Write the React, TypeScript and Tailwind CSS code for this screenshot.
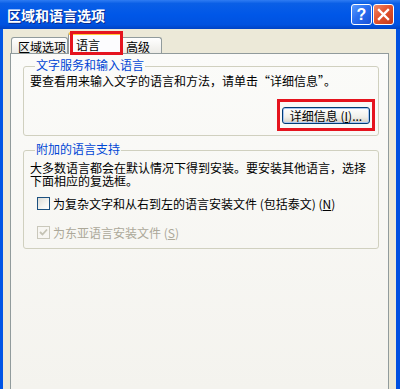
import React from "react";

const FONT = "font-['Noto_Sans_CJK_SC','Noto_Sans',sans-serif]";

function HelpButton() {
  return (
    <div className="w-[21px] h-[21px] rounded-[3px] border border-white bg-[linear-gradient(135deg,#5a9bff_0%,#2a6ff0_45%,#1750d8_100%)] flex items-center justify-center">
      <span className="text-white font-bold text-[16px] leading-none font-['Liberation_Sans',sans-serif]">?</span>
    </div>
  );
}

function CloseButton() {
  return (
    <div className="w-[21px] h-[21px] rounded-[3px] border border-white bg-[linear-gradient(135deg,#f0896a_0%,#e2542f_45%,#c5381a_100%)] flex items-center justify-center">
      <svg width="13" height="13" viewBox="0 0 13 13">
        <path d="M2 2 L11 11 M11 2 L2 11" stroke="white" strokeWidth="2.4" strokeLinecap="square" />
      </svg>
    </div>
  );
}

function Checkbox({ checked, disabled }: { checked?: boolean; disabled?: boolean }) {
  return (
    <div
      className={
        disabled
          ? "w-[13px] h-[13px] border border-[#cac8bb] bg-[#f7f6f2] flex items-center justify-center shrink-0"
          : "w-[13px] h-[13px] border border-[#1c5180] bg-[linear-gradient(135deg,#dcdcd7_0%,#f4f4f0_60%,#ffffff_100%)] flex items-center justify-center shrink-0"
      }
    >
      {checked && (
        <svg width="9" height="9" viewBox="0 0 9 9">
          <path d="M1 4 L3.5 6.5 L8 1.5" fill="none" stroke={disabled ? "#c4c2b4" : "#21a121"} strokeWidth="1.8" />
        </svg>
      )}
    </div>
  );
}

export default function App() {
  return (
    <div className={`w-[400px] h-[389px] overflow-hidden flex flex-col bg-[#ECE9D8] text-[12px] text-black ${FONT}`}>
      {/* Title bar */}
      <div className="h-[29px] shrink-0 flex items-center pl-[7px] pr-[6px] bg-[linear-gradient(to_bottom,#2f7cf2_0%,#0a5fe6_12%,#0057e8_50%,#0052e0_85%,#0043c4_100%)]">
        <span className="text-white font-bold text-[14px] leading-none [text-shadow:1px_1px_0_#0a2a8a]">
          区域和语言选项
        </span>
        <div className="ml-auto flex items-center gap-[1px]">
          <HelpButton />
          <CloseButton />
        </div>
      </div>

      {/* Body */}
      <div className="flex-1 flex flex-col border-l-[3px] border-r-[4px] border-l-[#0055e5] border-r-[#0050e0] pl-[7px] pr-[7px] pt-[3px]">
        {/* Tabs */}
        <div className="h-[21px] flex items-end pl-[1px] shrink-0">
          <div className="w-[57px] h-[16px] rounded-t-[3px] border border-b-0 border-[#919b9c] bg-[linear-gradient(to_bottom,#ffffff,#ecebe6)] pl-[6px] flex items-center leading-[14px] pt-[2px]">
            区域选项
          </div>
          <div className="relative z-10 w-[53px] h-[22px] -mb-[1px] rounded-t-[3px] border-x border-[#919b9c] border-t-[3px] border-t-[#ffc83c] bg-[#fcfcfe] pl-[7px] flex items-center leading-[14px]">
            语言
            <div className="absolute -top-[4px] left-[1px] -right-[3px] -bottom-[1px] border-[3px] border-[#e5141e] pointer-events-none" />
          </div>
          <div className="w-[43px] h-[16px] -ml-[2px] rounded-t-[3px] border border-b-0 border-[#919b9c] bg-[linear-gradient(to_bottom,#ffffff,#ecebe6)] pl-[6px] flex items-center leading-[14px] pt-[2px]">
            高级
          </div>
        </div>

        {/* Panel */}
        <div className="flex-1 border border-b-0 border-[#919b9c] bg-[linear-gradient(to_bottom,#fbfbf9,#f4f3ee)] pt-[4px]">
          {/* Group 1 */}
          <fieldset className="ml-[12px] w-[356px] border border-[#d0d0bf] rounded-[3px] pl-[6px] pr-[8px] pb-[11px]">
            <legend className="ml-[5px] px-[1px] pb-[2px] leading-[14px] text-[#0046d5]">文字服务和输入语言</legend>
            <div className="leading-[14px]">要查看用来输入文字的语言和方法，请单击“详细信息”。</div>
            <div className="mt-[19px] flex justify-end">
              <div className="relative">
                <button className="w-[88px] h-[17px] rounded-[3px] border border-[#003c74] bg-[linear-gradient(to_bottom,#ffffff,#f0f0ea_60%,#d6d0c5)] shadow-[inset_0_0_0_1px_#a8c6f3] flex items-center justify-center text-[12px] leading-none">
                  详细信息 (<span className="underline">I</span>)...
                </button>
                <div className="absolute -left-[5px] -right-[5px] -top-[8px] -bottom-[7px] border-[3px] border-[#e5141e] pointer-events-none" />
              </div>
            </div>
          </fieldset>

          {/* Group 2 */}
          <fieldset className="mt-[6px] ml-[12px] w-[356px] border border-[#d0d0bf] rounded-[3px] pl-[6px] pr-[8px] pb-[9px]">
            <legend className="ml-[5px] px-[1px] pb-[2px] leading-[14px] text-[#0046d5]">附加的语言支持</legend>
            <div className="mt-[3px] leading-[13px]">
              大多数语言都会在默认情况下得到安装。要安装其他语言，选择
              <br />
              下面相应的复选框。
            </div>
            <div className="mt-[10px] ml-[7px] h-[13px] flex items-center gap-[3px]">
              <Checkbox />
              <span className="leading-[13px]">为复杂文字和从右到左的语言安装文件 (包括泰文) (<span className="underline">N</span>)</span>
            </div>
            <div className="mt-[16px] ml-[7px] h-[13px] flex items-center gap-[3px]">
              <Checkbox checked disabled />
              <span className="leading-[13px] text-[#aca899]">为东亚语言安装文件 (<span className="underline">S</span>)</span>
            </div>
          </fieldset>
        </div>
      </div>
    </div>
  );
}
